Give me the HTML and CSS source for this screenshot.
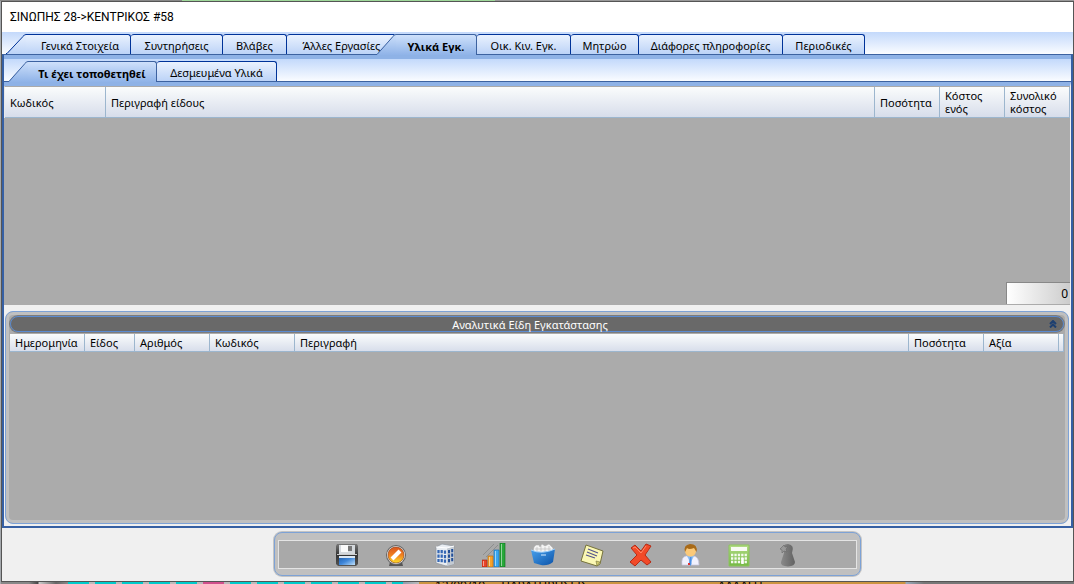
FILE: index.html
```html
<!DOCTYPE html>
<html lang="el">

<head>
    <meta charset="UTF-8">
    <meta name="viewport" content="width=device-width, initial-scale=1.0">
    <link rel="stylesheet" href="styles.css">
    <title>ΣΙΝΩΠΗΣ 28-&gt;ΚΕΝΤΡΙΚΟΣ #58</title>
</head>

<body>
    <div class="window">
        <h1 class="title">ΣΙΝΩΠΗΣ 28-&gt;ΚΕΝΤΡΙΚΟΣ #58</h1>
        <nav class="tabs main-tabs">
            <button class="tab slanted first">
                <svg class="slope" viewBox="0 0 20 21">
                    <defs><linearGradient id="tabFill" x2="0" y2="1"><stop offset="0" stop-color="#eaf2fe"/><stop offset="1" stop-color="#bcd3f7"/></linearGradient></defs>
                    <path fill="url(#tabFill)" d="M0 20 17 2Q18 0 20 0V20Z"/><path class="edge" d="M0 19.500H1L17 2.500Q18 .5 20 .5"/>
                </svg>
                Γενικά Στοιχεία</button>
            <button class="tab">Συντηρήσεις</button>
            <button class="tab">Βλάβες</button>
            <button class="tab before-active">Άλλες Εργασίες</button>
            <button class="tab slanted active">
                <svg class="slope" viewBox="0 0 20 21">
                    <defs><linearGradient id="activeFill" x2="0" y2="1"><stop offset="0" stop-color="#cfe1fb"/><stop offset="1" stop-color="#8fb3e8"/></linearGradient></defs>
                    <path fill="url(#activeFill)" d="M0 21 17 2Q18 0 20 0V21Z"/><path class="edge" d="M0 20.500H1L17 2.500Q18 .5 20 .5"/>
                </svg>
                Υλικά Εγκ.</button>
            <button class="tab">Οικ. Κιν. Εγκ.</button>
            <button class="tab">Μητρώο</button>
            <button class="tab">Διάφορες πληροφορίες</button>
            <button class="tab">Περιοδικές</button>
        </nav>
        <main class="page">
            <nav class="tabs sub-tabs">
                <button class="tab slanted active">
                    <svg class="slope" viewBox="0 0 20 21"><path fill="url(#activeFill)" d="M0 21 17 2Q18 0 20 0V21Z"/><path class="edge" d="M0 20.500H1L17 2.500Q18 .5 20 .5"/></svg>
                    Τι έχει τοποθετηθεί</button>
                <button class="tab">Δεσμευμένα Υλικά</button>
            </nav>
            <section class="materials">
                <table class="grid">
                    <colgroup>
                        <col class="w100">
                        <col>
                        <col class="w65">
                        <col class="w65">
                        <col class="w65">
                    </colgroup>
                    <thead>
                        <tr>
                            <th>Κωδικός</th>
                            <th>Περιγραφή είδους</th>
                            <th>Ποσότητα</th>
                            <th>Κόστος ενός</th>
                            <th>Συνολικό κόστος</th>
                        </tr>
                    </thead>
                </table>
                <input class="total" type="text" value="0" aria-label="Συνολικό κόστος" readonly>
            </section>
            <section class="group">
                <header class="group-bar">
                    <h2>Αναλυτικά Είδη Εγκατάστασης</h2>
                    <button class="collapse" aria-label="Σύμπτυξη">
                        <svg viewBox="0 0 8 8"><path d="M1 4 4 1 7 4M1 7.500 4 4.500 7 7.500"/></svg>
                    </button>
                </header>
                <table class="grid small">
                    <colgroup>
                        <col class="w75">
                        <col class="w50">
                        <col class="w75">
                        <col class="w85">
                        <col>
                        <col class="w75">
                        <col class="w75">
                        <col class="w5">
                    </colgroup>
                    <thead>
                        <tr>
                            <th>Ημερομηνία</th>
                            <th>Είδος</th>
                            <th>Αριθμός</th>
                            <th>Κωδικός</th>
                            <th>Περιγραφή</th>
                            <th>Ποσότητα</th>
                            <th>Αξία</th>
                            <td></td>
                        </tr>
                    </thead>
                </table>
            </section>
        </main>
        <footer class="footer">
            <div class="toolbar">
                <div class="tools">
                    <button class="tool" aria-label="Αποθήκευση">
                        <svg viewBox="0 0 24 24">
                            <defs>
                                <linearGradient id="dark" x2="0" y2="1"><stop offset="0" stop-color="#777"/><stop offset=".5" stop-color="#333"/><stop offset="1" stop-color="#555"/></linearGradient>
                                <linearGradient id="blue" x2="1" y2="1"><stop offset="0" stop-color="#1c5aa8"/><stop offset=".5" stop-color="#3f86d8"/><stop offset="1" stop-color="#bfe0fa"/></linearGradient>
                            </defs>
                            <path d="M2 1H22L23 3V21L21 23H3L1 21V3Z" fill="url(#dark)"/>
                            <path d="M4 2H20V11H4Z" fill="#d4d8dc"/>
                            <path d="M6 2H13V9H6Z" fill="#fafafa"/>
                            <path d="M13 3H17V8H13Z" fill="#777"/>
                            <path d="M2 11.500H22" stroke="#ccc"/>
                            <path d="M4 13H20V22H4Z" fill="url(#blue)"/>
                            <path d="M4 13H20V15H4Z" fill="#dce8f4"/>
                        </svg>
                    </button>
                    <button class="tool" aria-label="Ακύρωση">
                        <svg viewBox="0 0 24 24">
                            <defs><linearGradient id="orange" x2="0" y2="1"><stop offset="0" stop-color="#d9541e"/><stop offset=".5" stop-color="#f08020"/><stop offset="1" stop-color="#ffe028"/></linearGradient></defs>
                            <path d="M6 19H18L19 23H5Z" fill="#555"/>
                            <circle cx="12" cy="12" r="10" fill="#666"/>
                            <circle cx="12" cy="12" r="9" fill="#eee"/>
                            <circle cx="12" cy="12" r="8" fill="url(#orange)" stroke="#8c3a10" stroke-width=".6"/>
                            <path d="M8 16 16 8" stroke="#fff" stroke-width="4"/>
                        </svg>
                    </button>
                    <button class="tool" aria-label="Κτίρια">
                        <svg viewBox="0 0 24 24">
                            <path d="M3 4 9 1 21 3V21L13 23 3 20Z" fill="#e9edf2" stroke="#8d949c" stroke-width=".7"/>
                            <path d="M14 5 21 3V21L14 23Z" fill="#c3cad2"/>
                            <path d="M3 4 14 5 21 3" fill="none" stroke="#fff"/>
                            <path d="M5.500 7V19M8.700 7V20M12 7.500V21" stroke="#3567b4" stroke-width="2.300" stroke-dasharray="3.300 1.200"/>
                            <path d="M16 7V20M19.200 6V19" stroke="#234f98" stroke-width="2" stroke-dasharray="3.300 1.200"/>
                        </svg>
                    </button>
                    <button class="tool" aria-label="Στατιστικά">
                        <svg viewBox="0 0 24 24">
                            <path d="M1 12 12 1M4 14 16 2" stroke="#8e8e8e"/>
                            <path d="M0 17H5V24H0Z" fill="#e8452a" stroke="#a8200c" stroke-width=".6"/>
                            <path d="M6 13H11V24H6Z" fill="#f7a22a" stroke="#b56a08" stroke-width=".6"/>
                            <path d="M12 7H17V24H12Z" fill="#3aa8f0" stroke="#1466ac" stroke-width=".6"/>
                            <path d="M18 0H23V24H18Z" fill="#28a83a" stroke="#0c6c1c" stroke-width=".6"/>
                            <path d="M1.500 18V23M7.500 14V23M13.500 8V23M19.500 1V23" stroke="#fff" stroke-opacity=".5"/>
                        </svg>
                    </button>
                    <button class="tool" aria-label="Αρχείο">
                        <svg viewBox="0 0 24 24">
                            <defs><linearGradient id="box" x2="1" y2="1"><stop offset="0" stop-color="#4aa3ee"/><stop offset="1" stop-color="#0b52a8"/></linearGradient></defs>
                            <path d="M2 9 3 4 5 2H8L9 4 11 1 14 3 18 1 22 5V10Z" fill="#f4f4f4" stroke="#aaa" stroke-width=".5"/>
                            <path d="M4 6H20M6 4V8M10 3V8M14 4V8M18 3V8" stroke="#bbb" stroke-width=".7"/>
                            <path d="M0 7Q11 12 24 6L22 19Q17 23 10 22L3 20Z" fill="url(#box)"/>
                            <path d="M0 7Q11 12 24 6" fill="none" stroke="#9fd0fb"/>
                            <path d="M10 12H15" stroke="#d7ecff"/>
                        </svg>
                    </button>
                    <button class="tool" aria-label="Σημείωση">
                        <svg viewBox="0 0 24 24">
                            <path d="M6 2 23 8 20 21 17 23 1 18Z" fill="#fbf8b4" stroke="#77733c"/>
                            <path d="M20 19 16 18 17 23Z" fill="#d0ca6c" stroke="#77733c" stroke-width=".6"/>
                            <path d="M8 6 18 10M7 9 17 13M6 12 15 15" stroke="#56568c" stroke-width="1.300"/>
                        </svg>
                    </button>
                    <button class="tool" aria-label="Διαγραφή">
                        <svg viewBox="0 0 24 24">
                            <path d="M2 5 6 2 12 8 17 1 22 3 16 12 22 19 18 22 12 17 6 23 1 19 8 12Z" fill="#f24a28" stroke="#b52a14" stroke-linejoin="round"/>
                            <path d="M7 19 18 5M6 6 17 18" stroke="#f24a28" stroke-width="4"/>
                            <path d="M4 5 6 4 12 10 17 3" fill="none" stroke="#ff8a68"/>
                        </svg>
                    </button>
                    <button class="tool" aria-label="Πελάτης">
                        <svg viewBox="0 0 24 24">
                            <path d="M4 22Q3 14 8 13H16Q21 14 21 22Z" fill="#f1f1fd" stroke="#c4c4e0" stroke-width=".7"/>
                            <path d="M9 13H16L12.500 20Z" fill="#8bbdf4"/>
                            <path d="M12 14H13.500V21L12.500 23 11 20Z" fill="#4c8fe4"/>
                            <circle cx="12.500" cy="8" r="5.500" fill="#fbc979"/>
                            <path d="M7 9Q5 2 12 1 20 1 18.500 9L16 5Q11 7 9 5Z" fill="#a86a18"/>
                            <path d="M10 20H12V22H10Z" fill="#e03030"/>
                        </svg>
                    </button>
                    <button class="tool" aria-label="Υπολογισμός">
                        <svg viewBox="0 0 24 24">
                            <defs><linearGradient id="green" x2="0" y2="1"><stop offset="0" stop-color="#b3dc86"/><stop offset="1" stop-color="#74b944"/></linearGradient></defs>
                            <path d="M2 2H22V23H2Z" fill="url(#green)" stroke="#8cc45c"/>
                            <path d="M4 4H20V8H4Z" fill="#f8fbf4"/>
                            <path d="M4 12H20M4 15.500H20M4 19H20" stroke="#f4faee" stroke-width="2.300" stroke-dasharray="2.300 1.100"/>
                            <path d="M15.500 15V21" stroke="#fff" stroke-width="2.500"/>
                        </svg>
                    </button>
                    <button class="tool" aria-label="Χρήστης" disabled>
                        <svg viewBox="0 0 24 24">
                            <defs><linearGradient id="pawn"><stop offset="0" stop-color="#8a8a8a"/><stop offset="1" stop-color="#626262"/></linearGradient></defs>
                            <path d="M8 10Q5 1 12 1 19 2 16 10L19 19Q19 23 12 23.500 4 23 5 19Z" fill="url(#pawn)"/>
                            <path d="M8 2 9 4 12 4 10 6 11 9 8 8 6 10 6 7 4 6 6 4Z" fill="#999" stroke="#686868" stroke-width=".6"/>
                        </svg>
                    </button>
                </div>
            </div>
        </footer>
    </div>
    <!-- the window behind, only its top edge shows -->
    <div class="behind">
        <span>12/09/19</span>
        <span>ΠΑΡΑΤΗΡΗΣΕΙΣ</span>
        <span>ΑΛΛΑΓΗ</span>
    </div>
</body>

</html>
```
FILE: styles.css
```css
* {
    box-sizing: border-box;
}

body {
    margin: 0;
    min-height: 100vh;
    display: flex;
    flex-direction: column;
    padding: 1px 0 0 1px;
    font: 12px/13px "Noto Sans", "Open Sans", sans-serif;
    color: #000;
    background:
        linear-gradient(90deg, #888 182px, #9fd89a 182px, #9fd89a 495px, #999 495px) top / 100% 1px no-repeat,
        #a5a9ad;
}

button {
    font: inherit;
    color: inherit;
    border: 0;
    padding: 0;
    background: none;
}

.window {
    flex: 1;
    display: flex;
    flex-direction: column;
    border: 1px solid #555;
    background: #f0f0f0;
}

.title {
    margin: 0;
    padding: 0 8px;
    background: #fff;
    font: 12px/30px Roboto, sans-serif;
}

/* tab strips */
.tabs {
    display: grid;
    height: 23px;
    padding-top: 2px;
    border-bottom: 1px solid #3c62a0;
    background: linear-gradient(#c3d9fb, #fafcff);
}

.main-tabs {
    grid-template-columns: 125px 92px 64px 94px 96px 94px 68px 144px 82px;
    padding-left: 4px;
}

.sub-tabs {
    grid-template-columns: 149px 120px;
    padding-left: 4px;
}

.tab {
    position: relative;
    height: 20px;
    padding-top: 3px;
    border: 1px solid #003399;
    border-left-width: 0;
    border-bottom: 0;
    border-radius: 3px 3px 0 0;
    background: linear-gradient(#eaf2fe, #bcd3f7);
    font-size: 11px;
    line-height: 16px;
    white-space: nowrap;
}

.slanted {
    margin-left: 20px;
    border-top-left-radius: 0;
}

.first {
    padding-left: 4px;
}

.slope {
    position: absolute;
    top: -1px;
    left: -20px;
    width: 20px;
    height: 21px;
}

.slope .edge {
    fill: none;
    stroke: #003399;
}

.active {
    height: 21px;
    border-color: #3c62a0;
    background: linear-gradient(#cfe1fb, #8fb3e8);
    font-weight: bold;
}

.main-tabs .active {
    margin-left: 15px;
}

.active .edge {
    stroke: #3c62a0;
}

.before-active {
    margin-right: -15px;
    border-right: 0;
    border-top-right-radius: 0;
}

/* page under the tabs */
.page {
    flex: 1;
    display: flex;
    flex-direction: column;
    border: solid #3660a4;
    border-width: 0 2px 2px;
    background: #f0f0f0;
}

.page .tabs {
    border-top: 4px solid #8eb2e6;
    height: 27px;
}

.materials {
    flex: 1 1 223px;
    display: flex;
    flex-direction: column;
    justify-content: space-between;
    align-items: flex-end;
    border-top: 4px solid #8eb2e6;
    border-right: 1px solid #f0f0f0;
    padding-bottom: 1px;
    background: #ababab;
}

.grid {
    width: 100%;
    table-layout: fixed;
    border-collapse: separate;
    border-spacing: 0;
}

.materials .grid {
    border-top: 1px solid #aaa;
    border-left: 1px solid #e8e8e8;
}

.grid tr {
    height: 31px;
    background: linear-gradient(#fafcfc, #d6dcea);
}

.grid.small tr {
    height: 18px;
}

.grid th,
.grid td {
    padding: 0 2px 0 5px;
    border-right: 1px solid #9cb6ce;
    border-bottom: 1px solid #9cb6ce;
    font-size: 11px;
    font-weight: normal;
    text-align: left;
}

.grid td {
    padding: 0;
}

.w100 {
    width: 101px;
}

.w85 {
    width: 85px;
}

.w75 {
    width: 75px;
}

.w65 {
    width: 65px;
}

.w50 {
    width: 50px;
}

.w5 {
    width: 5px;
}

.total {
    width: 64px;
    height: 22px;
    padding: 0 2px;
    border: solid #888;
    border-width: 1px 0 0 1px;
    background: linear-gradient(90deg, #fff, #ccc);
    font: 12px/20px "Noto Sans", sans-serif;
    text-align: right;
}

.group {
    flex: 1 1 213px;
    margin: 6px 2px 2px 1px;
    padding: 4px;
    border: 1px solid #7da2d6;
    border-radius: 8px;
    background: #ababab;
    box-shadow: inset 0 0 0 3px #c0c0c0;
}

.group-bar {
    display: flex;
    align-items: center;
    height: 16px;
    margin-bottom: 2px;
    padding-right: 6px;
    border: 1px solid #5b8bd0;
    border-radius: 8px;
    background: #696969;
    box-shadow: 0 0 0 1px #7c7c7c;
}

.group-bar h2 {
    flex: 1;
    margin: 0;
    color: #fff;
    font-size: 11px;
    font-weight: normal;
    text-align: center;
}

.collapse {
    height: 8px;
}

.collapse svg {
    display: block;
    width: 8px;
    height: 8px;
    fill: none;
    stroke: #1d3f70;
    stroke-width: 2;
}

/* bottom toolbar */
.footer {
    display: flex;
    justify-content: center;
    padding: 4px 0 5px;
}

.toolbar {
    width: 587px;
    max-width: 100%;
    height: 44px;
    margin-left: 60px;
    padding: 7px 3px 6px;
    border: 1px solid #7da2d6;
    border-radius: 8px;
    background: #c0c0c0;
    box-shadow: 0 0 0 1px #c4c4c4;
}

.tools {
    display: flex;
    justify-content: center;
    gap: 25px;
    height: 100%;
    border: 1px solid #e4e4e4;
    background: #a9a9a9;
}

.tool svg {
    display: block;
    width: 24px;
    height: 24px;
}

.behind {
    display: flex;
    gap: 16px;
    height: 2px;
    padding-left: 434px;
    overflow: hidden;
    line-height: 8px;
    background:
        linear-gradient(90deg, #888 28px, #444 37px, #ccc 38px, #666 55px, #888 67px, transparent 67px, transparent 202px, #d0508c 202px, #d0508c 223px, transparent 223px, transparent 402px, #8f9dad 402px, #bbb 418px, #cc9440 418px, #cc9440 904px, #9ab 905px, #777 923px),
        repeating-linear-gradient(90deg, #00cccc 0, #00cccc 21px, #bbb 21px, #bbb 27px) 67px 0;
}

.behind span:last-child {
    margin-left: 114px;
}
```
